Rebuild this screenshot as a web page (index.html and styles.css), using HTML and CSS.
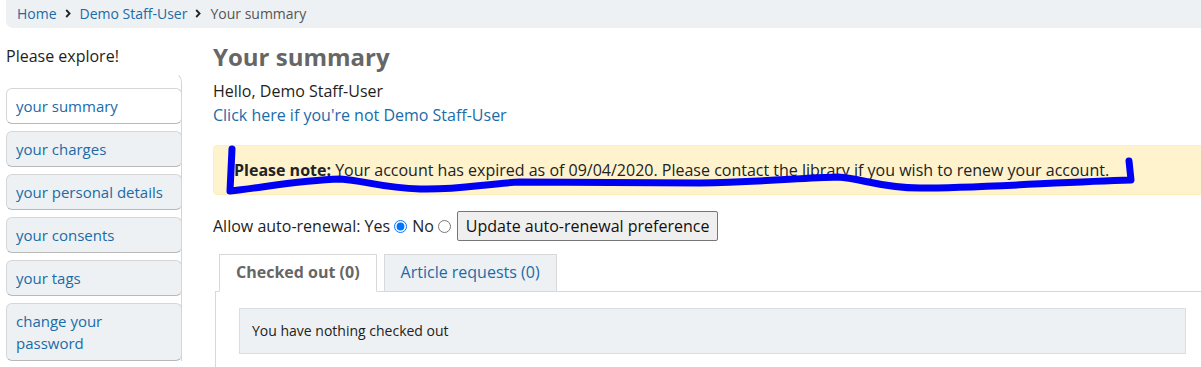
FILE: index.html
```html
<!DOCTYPE html>
<html lang="en">

<head>
    <meta charset="UTF-8">
    <meta name="viewport" content="width=device-width, initial-scale=1.0">
    <title>Your summary</title>
    <link rel="stylesheet" href="styles.css">
</head>

<body>
    <nav class="breadcrumb">
        <a href="#">Home</a>
        <svg class="chev" width="6" height="9" viewBox="0 0 6 9"><path d="M1.2 1 L4.6 4.5 L1.2 8" fill="none" stroke="#222" stroke-width="1.8"/></svg>
        <a href="#">Demo Staff-User</a>
        <svg class="chev" width="6" height="9" viewBox="0 0 6 9"><path d="M1.2 1 L4.6 4.5 L1.2 8" fill="none" stroke="#222" stroke-width="1.8"/></svg>
        <span class="current">Your summary</span>
    </nav>

    <div class="page">
        <aside class="sidebar">
            <p class="explore">Please explore!</p>
            <ul class="menu">
                <li class="active"><a href="#">your summary</a></li>
                <li><a href="#">your charges</a></li>
                <li><a href="#">your personal details</a></li>
                <li><a href="#">your consents</a></li>
                <li><a href="#">your tags</a></li>
                <li><a href="#">change your password</a></li>
            </ul>
        </aside>

        <main class="main">
            <h1>Your summary</h1>
            <p class="hello">Hello, Demo Staff-User<br><a href="#">Click here if you're not Demo Staff-User</a></p>

            <div class="alert"><strong>Please note:</strong> Your account has expired as of 09/04/2020. Please contact the library if you wish to renew your account.</div>

            <form class="renew">
                <span>Allow auto-renewal: Yes</span>
                <input type="radio" name="renew" checked>
                <span>No</span>
                <input type="radio" name="renew">
                <button type="button">Update auto-renewal preference</button>
            </form>

            <div class="tabs-wrap">
                <ul class="tabs">
                    <li class="active">Checked out (0)</li>
                    <li><a href="#">Article requests (0)</a></li>
                </ul>
                <div class="tab-panel">
                    <div class="empty">You have nothing checked out</div>
                </div>
            </div>
        </main>
    </div>

    <svg class="scribble" width="1201" height="367" viewBox="0 0 1201 367">
        <path d="M232 149 L230 191 C260 188, 300 180, 340 179 C362 180, 382 188, 420 189 C460 190, 482 184, 520 182 L700 183 C760 182, 800 178, 838 177 C860 178, 880 188, 920 188 C980 188, 1060 182, 1131 180 L1129 161" fill="none" stroke="#0000f2" stroke-width="7" stroke-linecap="round" stroke-linejoin="round"/>
    </svg>
</body>

</html>
```

FILE: styles.css
```css
body {
    margin: 0;
    font-family: "Open Sans", "DejaVu Sans", sans-serif;
    font-size: 16px;
    color: #1e1e1e;
    background-color: #ffffff;
    overflow: hidden;
    position: relative;
}

a {
    color: #1a6ba8;
    text-decoration: none;
}

.breadcrumb {
    display: flex;
    align-items: center;
    gap: 8px;
    height: 28px;
    margin-left: 6px;
    padding: 0 11px 2px;
    box-sizing: border-box;
    background-color: #eef1f3;
    border-radius: 0 0 0 7px;
    font-size: 14px;
}

.breadcrumb .chev {
    margin: 0 1px 0 0;
}

.breadcrumb .current {
    color: #555;
}

.page {
    display: flex;
}

.sidebar {
    width: 176px;
    margin-left: 6px;
    flex-shrink: 0;
}

.explore {
    margin: 16px 0 0;
    line-height: 24px;
}

.menu {
    list-style: none;
    margin: 4px 0 0;
    padding: 15px 0 0;
    border-top: 1px solid transparent;
    border-right: 1px solid #d4d4d4;
    border-top-right-radius: 10px;
}

.menu li {
    margin-bottom: 7px;
    background-color: #eef1f3;
    border: 1px solid #d6d6d6;
    border-bottom-color: #b8b8b8;
    border-radius: 6px;
    margin-right: -1px;
}

.menu li.active {
    background-color: #ffffff;
}

.menu li a {
    display: block;
    padding: 6px 9px;
    font-size: 15px;
    line-height: 22px;
}

.main {
    flex: 1;
    margin-left: 31px;
    min-width: 0;
}

h1 {
    margin: 13px 0 0;
    font-size: 24px;
    line-height: 32px;
    color: #666;
}

.hello {
    margin: 6px 0 0;
    line-height: 24px;
}

.alert {
    margin: 18px -12px 0 0;
    padding: 12px 20px;
    line-height: 24px;
    background-color: #fff3cd;
    border: 1px solid #ffeeba;
    border-radius: 4px;
    color: #222;
}

.renew {
    display: flex;
    align-items: center;
    margin-top: 16px;
    height: 30px;
}

.renew input {
    margin: 0 5px 0 4px;
    width: 13px;
    height: 13px;
}

.renew button {
    height: 30px;
    margin-left: 1px;
    padding: 0 8px;
    font-family: inherit;
    font-size: 16px;
    color: #111;
    background-color: #efefef;
    border: 1px solid #767676;
    border-radius: 2px;
}

.tabs-wrap {
    margin: 13px 0 0 2px;
}

.tabs {
    display: flex;
    gap: 7px;
    list-style: none;
    margin: 0;
    padding: 0 0 0 4px;
    border-bottom: 1px solid #d8d8d8;
}

.tabs li {
    margin-bottom: -1px;
    padding: 7px 16px 8px;
    line-height: 21px;
    font-size: 16px;
    background-color: #eef1f3;
    border: 1px solid #d8d8d8;
}

.tabs li.active {
    background-color: #ffffff;
    border-bottom-color: #ffffff;
    font-weight: bold;
    color: #666;
}

.tab-panel {
    border-left: 1px solid #d8d8d8;
    padding: 16px 15px 20px 23px;
}

.empty {
    padding: 12px;
    font-size: 14px;
    line-height: 20px;
    color: #222;
    background-color: #eef1f3;
    border: 1px solid #d9dee2;
}

.scribble {
    position: absolute;
    left: 0;
    top: 0;
    pointer-events: none;
}
```
